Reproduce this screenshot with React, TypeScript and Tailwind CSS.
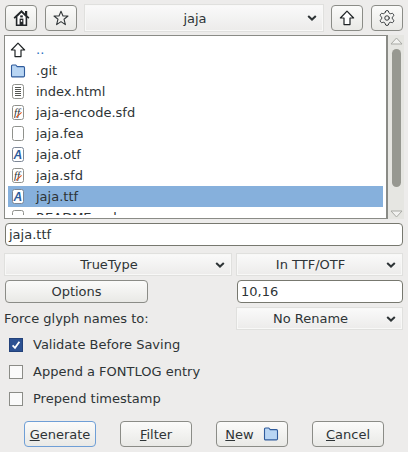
import { Settings } from 'lucide-react';
import type { ReactNode } from 'react';

type FileKind = 'up' | 'folder' | 'doc' | 'sfd' | 'blank' | 'font';

interface FileEntry {
  name: string;
  kind: FileKind;
  selected?: boolean;
}

const FILES: FileEntry[] = [
  { name: '..', kind: 'up' },
  { name: '.git', kind: 'folder' },
  { name: 'index.html', kind: 'doc' },
  { name: 'jaja-encode.sfd', kind: 'sfd' },
  { name: 'jaja.fea', kind: 'blank' },
  { name: 'jaja.otf', kind: 'font' },
  { name: 'jaja.sfd', kind: 'sfd' },
  { name: 'jaja.ttf', kind: 'font', selected: true },
  { name: 'README.md', kind: 'blank' },
];

const UpArrow = () => (
  <svg width="16" height="16" viewBox="0 0 16 16" fill="#fff" stroke="#1f2325" strokeWidth="1.2">
    <path d="M8 1.2 14.6 8H11v6.6H5V8H1.4Z" strokeLinejoin="round" />
  </svg>
);

const Folder = ({ w = 16, h = 14 }: { w?: number; h?: number }) => (
  <svg width={w} height={h} viewBox="0 0 16 14" fill="#b8d5f3" stroke="#2f5b9c" strokeWidth="1.1">
    <path d="M1.5 2.2c0-.7.4-1.2 1.1-1.2h3.2l1.4 1.6h6.2c.7 0 1.1.5 1.1 1.2v7.9c0 .7-.4 1.2-1.1 1.2H2.6c-.7 0-1.1-.5-1.1-1.2Z" strokeLinejoin="round" />
  </svg>
);

const Sheet = ({ children, edge = '#8f918c' }: { children?: ReactNode; edge?: string }) => (
  <svg width="12" height="15" viewBox="0 0 12 15" fill="none">
    <rect x="0.5" y="0.5" width="11" height="14" rx="2" fill="#fff" stroke={edge} />
    {children}
  </svg>
);

const FileIcon = ({ kind }: { kind: FileKind }) => {
  if (kind === 'up') return <UpArrow />;
  if (kind === 'folder') return <Folder />;
  if (kind === 'doc') {
    return (
      <Sheet>
        <path d="M3 3.5h6M3 5.5h6M3 7.5h6M3 9.5h6M3 11.5h6" stroke="#555753" strokeWidth="1" />
      </Sheet>
    );
  }
  if (kind === 'sfd') {
    return (
      <Sheet>
        <text x="2" y="11" fontSize="11" fontStyle="italic" fontFamily="'Liberation Serif', serif" fill="#2e3436">
          ff
        </text>
        <path d="M4 12.4 9.6 7.4" stroke="#e0561e" strokeWidth="1.1" />
      </Sheet>
    );
  }
  if (kind === 'font') {
    return (
      <Sheet edge="#7d8796">
        <text x="1.6" y="11.8" fontSize="12" fontWeight="700" fontStyle="italic" fontFamily="'Liberation Sans', sans-serif" fill="#2f5b9c">
          A
        </text>
      </Sheet>
    );
  }
  return <Sheet />;
};

const ToolButton = ({ children }: { children: ReactNode }) => (
  <button className="flex h-[26px] w-8 items-center justify-center rounded-[4px] border border-[#8b8c87] bg-gradient-to-b from-[#fbfbfa] to-[#e9e9e6]">
    {children}
  </button>
);

const Chevron = () => (
  <svg width="10" height="7" viewBox="0 0 10 7" fill="none" stroke="#2e3436" strokeWidth="2">
    <path d="M1.2 1.4 5 5l3.8-3.6" />
  </svg>
);

const Select = ({ label, className }: { label: string; className: string }) => (
  <div className={`relative flex items-center justify-center border border-[#e0e0de] bg-gradient-to-b from-[#fafafa] to-[#ecebea] pr-[18px] shadow-[inset_0_0_0_1px_#f8f8f7] ${className}`}>
    <span>{label}</span>
    <span className="absolute right-[6px] top-1/2 flex -translate-y-1/2">
      <Chevron />
    </span>
  </div>
);

const TextBox = ({ value, className }: { value: string; className: string }) => (
  <div className={`flex h-[23px] items-center rounded-[4px] border border-[#77786f] bg-white pl-[3px] ${className}`}>
    {value}
  </div>
);

const PushButton = ({ children, focused }: { children: ReactNode; focused?: boolean }) => (
  <button
    className={`flex h-[26px] w-[72px] items-center justify-center gap-[9px] rounded-[4px] border bg-gradient-to-b from-[#fbfbfa] to-[#e9e9e6] ${
      focused ? 'border-[#6f9fd6]' : 'border-[#8b8c87]'
    }`}
  >
    {children}
  </button>
);

const CheckRow = ({ label, checked }: { label: string; checked?: boolean }) => (
  <div className="flex h-[27px] items-center gap-[10px] pl-[5px]">
    {checked ? (
      <span className="flex h-[14px] w-[14px] items-center justify-center border border-[#23427a] bg-[#2c5192]">
        <svg width="10" height="10" viewBox="0 0 10 10" fill="none" stroke="#fff" strokeWidth="1.8">
          <path d="M1.6 5.4 4 7.8 8.4 1.8" />
        </svg>
      </span>
    ) : (
      <span className="h-[14px] w-[14px] border border-[#8b8c87] bg-[#fafafa]" />
    )}
    <span>{label}</span>
  </div>
);

const Key = ({ children }: { children: string }) => <span className="underline">{children}</span>;

export default function App() {
  return (
    <div className="flex h-[452px] w-[408px] flex-col overflow-hidden bg-[#edeceb] pt-1 font-['DejaVu_Sans',sans-serif] text-[13px] leading-none text-[#2e3436]">
      <div className="flex h-[28px] items-center pl-[5px] pr-[5px]">
        <ToolButton>
          <svg width="17" height="18" viewBox="0 0 17 18">
            <path d="M8.5 1 .6 8.6l1 1.2 1.2-1.1V17h11.4V8.7l1.2 1.1 1-1.2-2.2-2.1V2h-2.2v2.4Z" fill="#23272a" />
            <path d="M8.5 3.8 4.4 7.7v7.8h8.2V7.7Z" fill="#fff" />
            <rect x="7.2" y="6.4" width="2.6" height="2" fill="#23272a" />
            <rect x="6.6" y="9.6" width="3.8" height="6.4" fill="#23272a" />
            <rect x="7.8" y="11" width="1.4" height="1.8" fill="#fff" />
          </svg>
        </ToolButton>
        <div className="ml-2">
          <ToolButton>
            <svg width="16" height="16" viewBox="0 0 16 16" fill="none" stroke="#33383a" strokeWidth="1.1" strokeLinejoin="round">
              <path d="M8 1.2 10 6h5l-4 3.2L12.4 14.6 8 11.6l-4.4 3L5 9.2 1 6h5Z" />
            </svg>
          </ToolButton>
        </div>
        <Select label="jaja" className="ml-[7px] h-[28px] w-[240px]" />
        <div className="ml-[7px]">
          <ToolButton>
            <UpArrow />
          </ToolButton>
        </div>
        <div className="ml-2">
          <ToolButton>
            <Settings size={18} strokeWidth={1.2} color="#23272a" />
          </ToolButton>
        </div>
      </div>

      <div className="mt-[3px] flex h-[184px] pl-1">
        <div className="h-full w-[384px] border border-[#8a8b86] border-r-2 bg-white px-[3px] pb-[3px] pt-[3px]">
          <div className="h-full overflow-hidden">
            {FILES.map((file) => (
              <div
                key={file.name}
                className={`flex h-[21px] shrink-0 items-center ${file.selected ? 'bg-[#86b0dc]' : ''}`}
              >
                <span className="mr-2 flex w-5 justify-center">
                  <FileIcon kind={file.kind} />
                </span>
                <span className={file.name === '..' ? 'text-[#2a6fc0]' : ''}>{file.name}</span>
              </div>
            ))}
          </div>
        </div>
        <div className="flex h-full w-[16px] flex-col items-center bg-[#e6e6e2]">
          <svg width="13" height="8" viewBox="0 0 13 8" className="mt-[2px]" fill="#f2f2f0" stroke="#a9aaa5">
            <path d="M6.5 1 12 7H1Z" />
          </svg>
          <div className="mt-[4px] h-[138px] w-[9px] rounded-full bg-[#979891]" />
          <svg width="13" height="8" viewBox="0 0 13 8" className="mt-auto mb-[1px]" fill="#f2f2f0" stroke="#a9aaa5">
            <path d="M1 1h11L6.5 7Z" />
          </svg>
        </div>
      </div>

      <div className="mt-1 px-[5px]">
        <TextBox value="jaja.ttf" className="w-full" />
      </div>

      <div className="mt-[7px] flex gap-1 pl-1 pr-[5px]">
        <Select label="TrueType" className="h-[23px] w-[228px]" />
        <Select label="In TTF/OTF" className="h-[23px] flex-1" />
      </div>

      <div className="mt-[4px] flex justify-between px-[5px]">
        <button className="flex h-[23px] w-[143px] items-center justify-center rounded-[4px] border border-[#8b8c87] bg-gradient-to-b from-[#fbfbfa] to-[#e9e9e6]">
          Options
        </button>
        <TextBox value="10,16" className="w-[166px]" />
      </div>

      <div className="mt-[4px] flex items-center justify-between pl-1 pr-[5px]">
        <span>Force glyph names to:</span>
        <Select label="No Rename" className="h-[23px] w-[167px]" />
      </div>

      <div className="flex flex-col pl-[4px] pt-[1px]">
        <CheckRow label="Validate Before Saving" checked />
        <CheckRow label="Append a FONTLOG entry" />
        <CheckRow label="Prepend timestamp" />
      </div>

      <div className="mt-[9px] flex justify-between px-6">
        <PushButton focused>
          <span>
            <Key>G</Key>enerate
          </span>
        </PushButton>
        <PushButton>
          <span>
            <Key>F</Key>ilter
          </span>
        </PushButton>
        <PushButton>
          <span>
            <Key>N</Key>ew
          </span>
          <Folder w={16} h={14} />
        </PushButton>
        <PushButton>
          <span>
            <Key>C</Key>ancel
          </span>
        </PushButton>
      </div>
    </div>
  );
}
